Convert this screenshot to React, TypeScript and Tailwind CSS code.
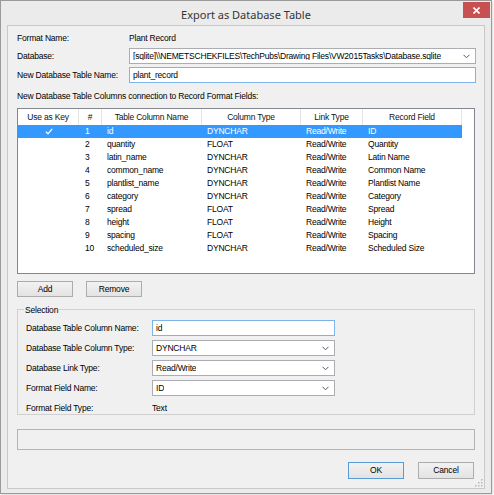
import React from "react";

/**
 * Export as Database Table dialog (Windows 8 style)
 */

type Row = {
  n: number;
  name: string;
  type: string;
  link: string;
  field: string;
};

const rows: Row[] = [
  { n: 1, name: "id", type: "DYNCHAR", link: "Read/Write", field: "ID" },
  { n: 2, name: "quantity", type: "FLOAT", link: "Read/Write", field: "Quantity" },
  { n: 3, name: "latin_name", type: "DYNCHAR", link: "Read/Write", field: "Latin Name" },
  { n: 4, name: "common_name", type: "DYNCHAR", link: "Read/Write", field: "Common Name" },
  { n: 5, name: "plantlist_name", type: "DYNCHAR", link: "Read/Write", field: "Plantlist Name" },
  { n: 6, name: "category", type: "DYNCHAR", link: "Read/Write", field: "Category" },
  { n: 7, name: "spread", type: "FLOAT", link: "Read/Write", field: "Spread" },
  { n: 8, name: "height", type: "FLOAT", link: "Read/Write", field: "Height" },
  { n: 9, name: "spacing", type: "FLOAT", link: "Read/Write", field: "Spacing" },
  { n: 10, name: "scheduled_size", type: "DYNCHAR", link: "Read/Write", field: "Scheduled Size" },
];

function Chevron() {
  return (
    <svg width="7" height="5" viewBox="0 0 7 5" className="shrink-0">
      <path d="M0.5 0.8 L3.5 3.8 L6.5 0.8" fill="none" stroke="#555" strokeWidth="1" />
    </svg>
  );
}

function Combo({ value, className }: { value: string; className: string }) {
  return (
    <div
      className={`flex items-center justify-between bg-white border border-[#abadb3] pl-[3px] pr-[5px] ${className}`}
    >
      <span className="truncate">{value}</span>
      <Chevron />
    </div>
  );
}

function Button({
  label,
  className,
  focused,
}: {
  label: string;
  className: string;
  focused?: boolean;
}) {
  return (
    <div
      className={`flex items-center justify-center bg-gradient-to-b from-[#f2f2f2] to-[#e3e3e3] border ${
        focused ? "border-[#5b9bd5]" : "border-[#acacac]"
      } ${className}`}
    >
      {label}
    </div>
  );
}

export default function App() {
  return (
    <div className="w-[494px] h-[495px] bg-white font-['Liberation_Sans',Arial,sans-serif] text-[8.5px] tracking-[-0.2px] text-black leading-none">
      <div className="w-[492px] h-[494px] flex flex-col bg-[#ebebeb] border border-[#9a9a9a] shadow-[1px_1px_2px_rgba(0,0,0,0.15)]">
        {/* title bar */}
        <div className="relative h-[24px] shrink-0 flex items-center justify-center">
          <span className="font-['Noto_Sans',sans-serif] text-[11px] tracking-normal text-[#333] pt-[2px]">
            Export as Database Table
          </span>
          <div className="absolute right-[1px] top-[1px] w-[27px] h-[16px] bg-[#c75050] flex items-center justify-center">
            <svg width="7" height="7" viewBox="0 0 7 7">
              <path d="M0.5 0.5 L6.5 6.5 M6.5 0.5 L0.5 6.5" stroke="#fff" strokeWidth="1.6" />
            </svg>
          </div>
        </div>

        {/* client area */}
        <div className="relative flex-1 mx-[6px] mb-[4px] border border-[#c9c9c9] bg-[#f0f0f0] flex flex-col px-[9px]">
          <div className="flex items-center h-[14px] mt-[5px]">
            <span className="w-[112px]">Format Name:</span>
            <span>Plant Record</span>
          </div>
          <div className="flex items-center h-[16px] mt-[3px]">
            <span className="w-[112px]">Database:</span>
            <Combo
              value="[sqlite]\\NEMETSCHEKFILES\TechPubs\Drawing Files\VW2015Tasks\Database.sqlite"
              className="flex-1 h-[16px] mr-[-1px]"
            />
          </div>
          <div className="flex items-center h-[16px] mt-[3px]">
            <span className="w-[112px]">New Database Table Name:</span>
            <div className="flex-1 h-[16px] mr-[-1px] bg-white border border-[#7eb4ea] flex items-center pl-[3px]">
              plant_record
            </div>
          </div>
          <div className="flex items-center h-[12px] mt-[7px]">
            New Database Table Columns connection to Record Format Fields:
          </div>

          {/* list */}
          <div className="mt-[6px] h-[166px] bg-white border border-[#828790] flex flex-col">
            <div className="flex h-[16px] shrink-0 items-center text-[#111]">
              <div className="w-[61px] h-full flex items-center justify-center border-r border-[#e5e5e5]">Use as Key</div>
              <div className="w-[23px] h-full flex items-center justify-center border-r border-[#e5e5e5]">#</div>
              <div className="w-[100px] h-full flex items-center justify-center border-r border-[#e5e5e5]">Table Column Name</div>
              <div className="w-[99px] h-full flex items-center justify-center border-r border-[#e5e5e5]">Column Type</div>
              <div className="w-[62px] h-full flex items-center justify-center border-r border-[#e5e5e5]">Link Type</div>
              <div className="w-[99px] h-full flex items-center justify-center border-r border-[#e5e5e5]">Record Field</div>
            </div>
            {rows.map((r) => {
              const sel = r.n === 1;
              return (
                <div
                  key={r.n}
                  className={`flex h-[13px] shrink-0 items-center w-[444px] ${sel ? "bg-[#3399ff] text-white" : ""}`}
                >
                  <div className="w-[61px] flex justify-center">
                    {sel ? (
                      <svg width="8" height="7" viewBox="0 0 8 7">
                        <path d="M0.8 3.6 L3 5.8 L7.2 0.8" fill="none" stroke="#fff" strokeWidth="1.3" />
                      </svg>
                    ) : null}
                  </div>
                  <div className="w-[23px] pl-[6px]">{r.n}</div>
                  <div className="w-[100px] pl-[5px]">{r.name}</div>
                  <div className="w-[99px] pl-[5px]">{r.type}</div>
                  <div className="w-[62px] pl-[5px]">{r.link}</div>
                  <div className="w-[99px] pl-[5px]">{r.field}</div>
                </div>
              );
            })}
          </div>

          {/* add/remove */}
          <div className="flex gap-[13px] mt-[7px]">
            <Button label="Add" className="w-[56px] h-[16px]" />
            <Button label="Remove" className="w-[56px] h-[16px]" />
          </div>

          {/* selection group */}
          <div className="relative mt-[12px] h-[106px] border border-[#d0d0d0] flex flex-col pl-[8px] pt-[10px]">
            <span className="absolute left-[6px] top-[-4px] bg-[#f0f0f0] px-[1px]">Selection</span>
            <div className="flex items-center h-[16px]">
              <span className="w-[126px]">Database Table Column Name:</span>
              <div className="w-[183px] h-[16px] bg-white border border-[#7eb4ea] flex items-center pl-[3px]">id</div>
            </div>
            <div className="flex items-center h-[16px] mt-[4px]">
              <span className="w-[126px]">Database Table Column Type:</span>
              <Combo value="DYNCHAR" className="w-[183px] h-[16px]" />
            </div>
            <div className="flex items-center h-[16px] mt-[4px]">
              <span className="w-[126px]">Database Link Type:</span>
              <Combo value="Read/Write" className="w-[183px] h-[16px]" />
            </div>
            <div className="flex items-center h-[16px] mt-[4px]">
              <span className="w-[126px]">Format Field Name:</span>
              <Combo value="ID" className="w-[183px] h-[16px]" />
            </div>
            <div className="flex items-center h-[12px] mt-[6px]">
              <span className="w-[126px]">Format Field Type:</span>
              <span>Text</span>
            </div>
          </div>

          {/* status */}
          <div className="mt-[14px] h-[21px] border border-[#b4b4b4]" />

          {/* ok / cancel */}
          <div className="flex justify-end gap-[14px] mt-[12px] mr-[1px]">
            <Button label="OK" className="w-[56px] h-[17px]" focused />
            <Button label="Cancel" className="w-[56px] h-[17px]" />
          </div>

          {/* size grip */}
          <svg width="8" height="8" viewBox="0 0 8 8" className="absolute right-[1px] bottom-[1px]">
            <rect x="6" y="0" width="1.5" height="1.5" fill="#b8b8b8" />
            <rect x="3" y="3" width="1.5" height="1.5" fill="#b8b8b8" />
            <rect x="6" y="3" width="1.5" height="1.5" fill="#b8b8b8" />
            <rect x="0" y="6" width="1.5" height="1.5" fill="#b8b8b8" />
            <rect x="3" y="6" width="1.5" height="1.5" fill="#b8b8b8" />
            <rect x="6" y="6" width="1.5" height="1.5" fill="#b8b8b8" />
          </svg>
        </div>
      </div>
    </div>
  );
}
